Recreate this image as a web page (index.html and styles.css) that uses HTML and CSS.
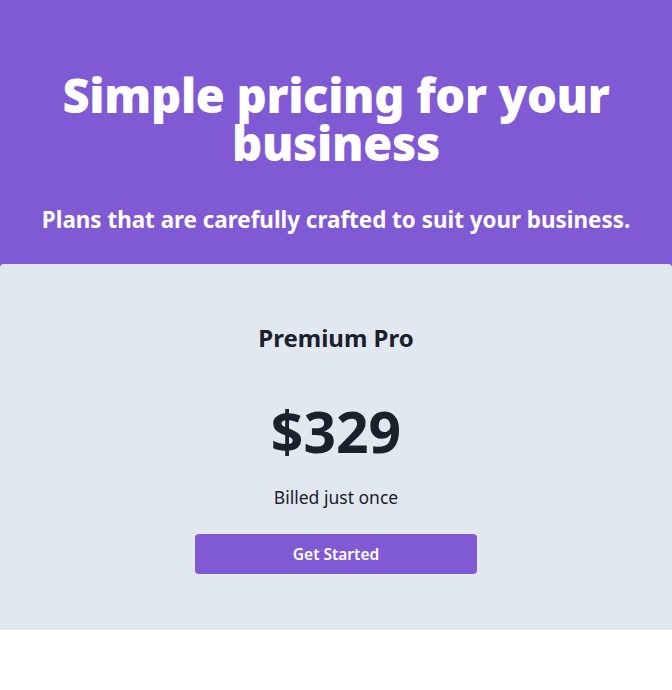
FILE: index.html
```html
<!DOCTYPE html>
<html lang="en">
<head>
<meta charset="utf-8">
<title>Simple pricing</title>
<link rel="stylesheet" href="styles.css">
</head>
<body>
<main class="page">
  <section class="hero">
    <div class="hero-text">
      <h1 class="hero-title">Simple pricing for your business</h1>
      <p class="hero-sub">Plans that are carefully crafted to suit your business.</p>
    </div>
    <div class="plan">
      <h2 class="plan-name">Premium Pro</h2>
      <p class="plan-price">$329</p>
      <p class="plan-note">Billed just once</p>
      <a class="plan-btn" href="#">Get Started</a>
    </div>
  </section>
</main>
</body>
</html>
```

FILE: styles.css
```css
html, body {
  margin: 0;
  padding: 0;
  background: #ffffff;
}
body {
  font-family: "Noto Sans", "Open Sans", "DejaVu Sans", sans-serif;
  color: #1a202c;
}
.page {
  display: flex;
  flex-direction: column;
}
.hero {
  background: #805ad5;
  display: flex;
  flex-direction: column;
}
.hero-text {
  padding: 71px 16px 30px;
  text-align: center;
  color: #ffffff;
}
.hero-title {
  margin: 0 auto;
  max-width: 580px;
  font-size: 47px;
  line-height: 48px;
  font-weight: 900;
  letter-spacing: -0.3px;
}
.hero-sub {
  margin: 39px 0 0;
  font-size: 22.4px;
  line-height: 28px;
  font-weight: 700;
}
.plan {
  background: #e2e8f0;
  border-radius: 4px 4px 0 0;
  padding: 58px 16px 56px;
  display: flex;
  flex-direction: column;
  align-items: center;
  text-align: center;
}
.plan-name {
  margin: 0;
  font-size: 24px;
  line-height: 32px;
  font-weight: 700;
}
.plan-price {
  margin: 45px 0 0;
  font-size: 57px;
  line-height: 64px;
  font-weight: 700;
}
.plan-note {
  margin: 20px 0 0;
  font-size: 17.5px;
  line-height: 28px;
}
.plan-btn {
  margin-top: 23px;
  width: 282px;
  height: 40px;
  display: flex;
  align-items: center;
  justify-content: center;
  background: #805ad5;
  color: #ffffff;
  border-radius: 4px;
  text-decoration: none;
  font-size: 15.5px;
  font-weight: 600;
}
```
